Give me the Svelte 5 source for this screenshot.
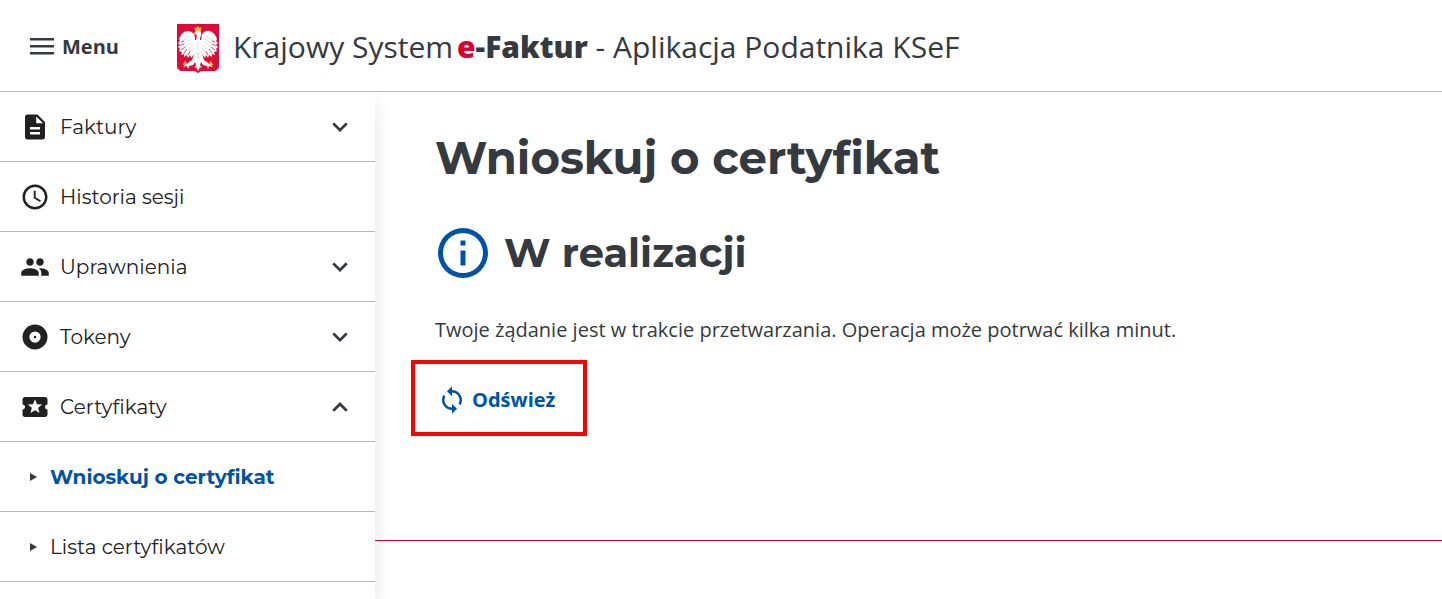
<script lang="ts">
	interface MenuItem {
		label: string;
		icon: string;
		children?: string[];
	}

	// Sidebar icons, all on a 24x24 grid
	const icons = {
		file: 'M14 2H6c-1.1 0-2 .9-2 2v16c0 1.1.9 2 2 2h12c1.1 0 2-.9 2-2V8l-6-6zm2 16H8v-2h8v2zm0-4H8v-2h8v2zm-3-5V3.5L18.500 9H13z',
		clock: 'M11.990 2C6.470 2 2 6.480 2 12s4.470 10 9.990 10C17.520 22 22 17.520 22 12S17.520 2 11.990 2zM12 20a8 8 0 1 1 0-16 8 8 0 0 1 0 16zM12.500 7H11v6l5 3 .75-1.230-4.250-2.520V7z',
		people: 'M16 11c1.660 0 2.990-1.340 2.990-3S17.660 5 16 5s-3 1.340-3 3 1.340 3 3 3zm-8 0c1.660 0 2.990-1.340 2.990-3S9.660 5 8 5 5 6.340 5 8s1.340 3 3 3zm0 2c-2.330 0-7 1.170-7 3.500V19h14v-2.500C15 14.170 10.330 13 8 13zm8 0c-.29 0-.62.02-.97.05 1.160.84 1.970 1.970 1.970 3.450V19h6v-2.500c0-2.330-4.670-3.500-7-3.500z',
		disc: 'M12 2a10 10 0 1 0 0 20 10 10 0 0 0 0-20zm0 14.500a4.500 4.500 0 1 1 0-9 4.500 4.500 0 0 1 0 9zM12 11a1 1 0 1 0 0 2 1 1 0 0 0 0-2z',
		ticket: 'M20 12c0-1.100.9-2 2-2V6c0-1.100-.9-2-2-2H4c-1.100 0-1.990.9-1.990 2v4c1.100 0 1.990.9 1.990 2s-.89 2-2 2v4c0 1.100.9 2 2 2h16c1.100 0 2-.9 2-2v-4c-1.100 0-2-.9-2-2zm-4.420 4.800L12 14.500l-3.580 2.300 1.080-4.120-3.290-2.690 4.240-.25L12 5.800l1.540 3.950 4.240.25-3.290 2.690 1.090 4.110z'
	};

	const items: MenuItem[] = [
		{ label: 'Faktury', icon: icons.file, children: [] },
		{ label: 'Historia sesji', icon: icons.clock },
		{ label: 'Uprawnienia', icon: icons.people, children: [] },
		{ label: 'Tokeny', icon: icons.disc, children: [] },
		{ label: 'Certyfikaty', icon: icons.ticket, children: ['Wnioskuj o certyfikat', 'Lista certyfikatów'] }
	];

	let open = $state('Certyfikaty');
	let current = $state('Wnioskuj o certyfikat');
	let menuVisible = $state(true);

	function toggle(label: string) {
		open = open === label ? '' : label;
	}
</script>

{#snippet rowContent(item: MenuItem)}
	<svg class="row-icon" viewBox="0 0 24 24" aria-hidden="true"><path fill-rule="evenodd" d={item.icon} /></svg>
	<span class="row-label">{item.label}</span>
	{#if item.children}
		<svg class="chevron" class:up={open === item.label} viewBox="0 0 24 24" aria-hidden="true">
			<path d="M7.410 8.300 12 12.900l4.590-4.600L18.200 9.800 12 16 5.800 9.800z" />
		</svg>
	{/if}
{/snippet}

<header class="topbar">
	<button type="button" class="menu-btn" aria-expanded={menuVisible} onclick={() => (menuVisible = !menuVisible)}>
		<svg viewBox="0 0 24 18" aria-hidden="true"><path d="M0 1h24v2.400H0zM0 8h24v2.400H0zM0 15h24v2.400H0z" /></svg>
		Menu
	</button>
	<a class="brand" href="#start">
		<svg class="emblem" viewBox="0 0 42 50" aria-hidden="true">
			<path fill="#dc0b38" d="M0 0h42v41c0 4-2 6-6 6H26c-3 0-4 1-5 2.500C20 48 19 47 16 47H6c-4 0-6-2-6-6z" />
			<g fill="#fff">
				<path d="M16 9c-4-3-8-2-10 0-2 1-3 4-4 6l1 2-2 2 2 2-2 2 2 2-1 2 3 1-1 3 3-1v3l3-2 1 3 2-3 1 3 3-4-2 6-3 2-2 2-4-1 2 2-2 2 4-1 1 3 1-3 4-1 2-3 1 3-2 3 2-1 2 4 2-4 2 1-2-3 1-3 2 3 4 1 1 3 1-3 4 1-2-2 2-2-4 1-2-2-3-2-2-6 3 4 1-3 2 3 1-3 3 2v-3l3 1-1-3 3-1-1-2 2-2-2-2 2-2-2-2 1-2c-1-2-2-5-4-6-3-3-7-3-10 0-2 2-1 5-2 7h-1c0-4 2-5 1-8-1-2-5-2-6 0l-1 2 3 1c-1 2 0 3-1 5h-1c0-3 0-5-2-7z" />
			</g>
			<g fill="none" stroke="#d7c6ca" stroke-width=".6">
				<path d="M13 12 5 17M14 15 4 21M15 18 5 25M16 21 7 29M17 24l-6 7M29 12l8 5M28 15l10 6M27 18l10 7M26 21l9 8M25 24l6 7M21 18v18M18 28l3 2 3-2M18 32l3 2 3-2" />
			</g>
			<g fill="none" stroke="#dc0b38" stroke-width=".7">
				<path d="m4 18 3-1M3 22l4-2M4 26l4-3M7 29l3-4M11 31l2-4M38 18l-3-1M39 22l-4-2M38 26l-4-3M35 29l-3-4M31 31l-2-4" />
			</g>
			<path fill="#edbd3b" d="m17.500 3 2 1L21 2l1.500 2 2-1-.8 4.500h-5.400zM18 8l-1 1 1 2 1-2zM6 40h3v1H6zM33 40h3v1h-3zM8 37l2 2-1 1-2-2zM34 37l-2 2 1 1 2-2z" />
		</svg>
		<span class="brand-name">Krajowy System<strong><em>e</em>-Faktur</strong> - Aplikacja Podatnika KSeF</span>
	</a>
</header>

<div class="layout">
	{#if menuVisible}
		<nav class="sidebar" aria-label="Menu">
			<ul>
				{#each items as item (item.label)}
					<li>
						{#if item.children}
							<button type="button" class="row" aria-expanded={open === item.label} onclick={() => toggle(item.label)}>
								{@render rowContent(item)}
							</button>
						{:else}
							<a class="row" href="#historia">{@render rowContent(item)}</a>
						{/if}
					</li>
					{#if item.children && open === item.label}
						{#each item.children as child (child)}
							<li>
								<a class="row sub" class:active={current === child} href="#certyfikaty" onclick={() => (current = child)}>
									<svg viewBox="0 0 8 8" aria-hidden="true"><path d="M0 0l7 4-7 4z" /></svg>
									{child}
								</a>
							</li>
						{/each}
					{/if}
				{/each}
			</ul>
		</nav>
	{/if}

	<div class="content">
		<main>
			<h1>Wnioskuj o certyfikat</h1>
			<h2>
				<svg viewBox="0 0 24 24" aria-hidden="true">
					<path d="M11 7h2v2h-2zM11 11h2v6h-2zM12 2a10 10 0 1 0 0 20 10 10 0 0 0 0-20zm0 18a8 8 0 1 1 0-16 8 8 0 0 1 0 16z" />
				</svg>
				W realizacji
			</h2>
			<p>Twoje żądanie jest w trakcie przetwarzania. Operacja może potrwać kilka minut.</p>
			<div class="highlight">
				<button type="button" class="refresh">
					<svg viewBox="0 0 24 24" aria-hidden="true">
						<path d="M12 4V1L8 5l4 4V6c3.310 0 6 2.690 6 6 0 1.010-.25 1.970-.7 2.800l1.460 1.460C19.540 15.030 20 13.570 20 12c0-4.420-3.580-8-8-8zm0 14c-3.310 0-6-2.690-6-6 0-1.010.25-1.970.7-2.800L5.240 7.740C4.460 8.970 4 10.430 4 12c0 4.420 3.580 8 8 8v3l4-4-4-4v3z" />
					</svg>
					Odśwież
				</button>
			</div>
		</main>
		<footer></footer>
	</div>
</div>

<style>
	:global(body) {
		background: #fff;
		color: #343a40;
		font-family: 'Open Sans', 'Noto Sans', sans-serif;
		font-size: 20px;
	}

	svg { fill: currentColor; flex: none; }
	button {
		background: none;
		border: none;
		padding: 0;
		color: inherit;
		font: inherit;
		cursor: pointer;
	}
	a { color: inherit; text-decoration: none; }

	.topbar {
		display: flex;
		align-items: center;
		gap: 58px;
		box-sizing: border-box;
		min-height: 92px;
		padding: 0 30px;
		border-bottom: 1px solid #b4b7b6;
	}
	.menu-btn {
		display: flex;
		align-items: center;
		gap: 8px;
		padding-top: 1px;
		font-weight: 700;
	}
	.menu-btn svg { width: 24px; height: 18px; }

	.brand {
		display: flex;
		align-items: center;
		gap: 14px;
		padding-top: 6px;
	}
	.emblem { width: 42px; height: 50px; }
	.brand-name { font-size: 30px; line-height: 44px; padding-bottom: 4px; }
	.brand-name strong { margin-left: 4px; font-weight: 800; }
	.brand-name em { font-style: normal; color: #dc0032; }

	.layout {
		display: flex;
		min-height: calc(100vh - 92px);
	}
	.sidebar {
		flex: none;
		width: 375px;
		box-shadow: 0 12px 18px rgba(0, 0, 0, 0.11);
		clip-path: inset(0 -20px 0 0);
		background: #fff;
		color: #212121;
		font-family: Montserrat, Inter, sans-serif;
		font-weight: 400;
	}
	ul { list-style: none; margin: 0; padding: 0; }
	li { border-bottom: 1px solid #b4b7b6; }

	.row {
		display: flex;
		align-items: center;
		gap: 10px;
		box-sizing: border-box;
		width: 100%;
		height: 69px;
		padding: 0 20px;
		text-align: left;
	}
	.row-icon { width: 30px; height: 30px; }
	.row-label { flex: 1; }
	.chevron { width: 30px; height: 30px; color: #343a40; }
	.chevron.up { transform: rotate(180deg); }

	.sub { gap: 12px; padding-left: 30px; }
	.sub svg { width: 8px; height: 8px; color: #343a40; }
	.sub.active { color: #0052a5; font-weight: 700; }

	.content { flex: 1; min-width: 0; }
	main {
		padding: 36px 60px 104px;
		border-bottom: 1px solid #dc0032;
	}
	h1, h2 {
		margin: 0;
		font-family: Montserrat, Inter, sans-serif;
		font-weight: 700;
	}
	h1 { font-size: 45px; line-height: 60px; }
	h2 {
		display: flex;
		align-items: center;
		gap: 11px;
		margin: 35px 0 32px -2px;
		font-size: 40px;
		line-height: 60px;
	}
	h2 svg { width: 60px; height: 60px; color: #0052a5; }
	p { margin: 0; line-height: 30px; }

	.highlight {
		display: inline-block;
		margin: 15px 0 0 -24px;
		padding: 21px 28px 17px 22px;
		border: 4px solid #f00;
	}
	.refresh {
		display: flex;
		align-items: center;
		gap: 5px;
		color: #0052a5;
		font-weight: 700;
		line-height: 30px;
	}
	.refresh svg { width: 30px; height: 30px; }
</style>
